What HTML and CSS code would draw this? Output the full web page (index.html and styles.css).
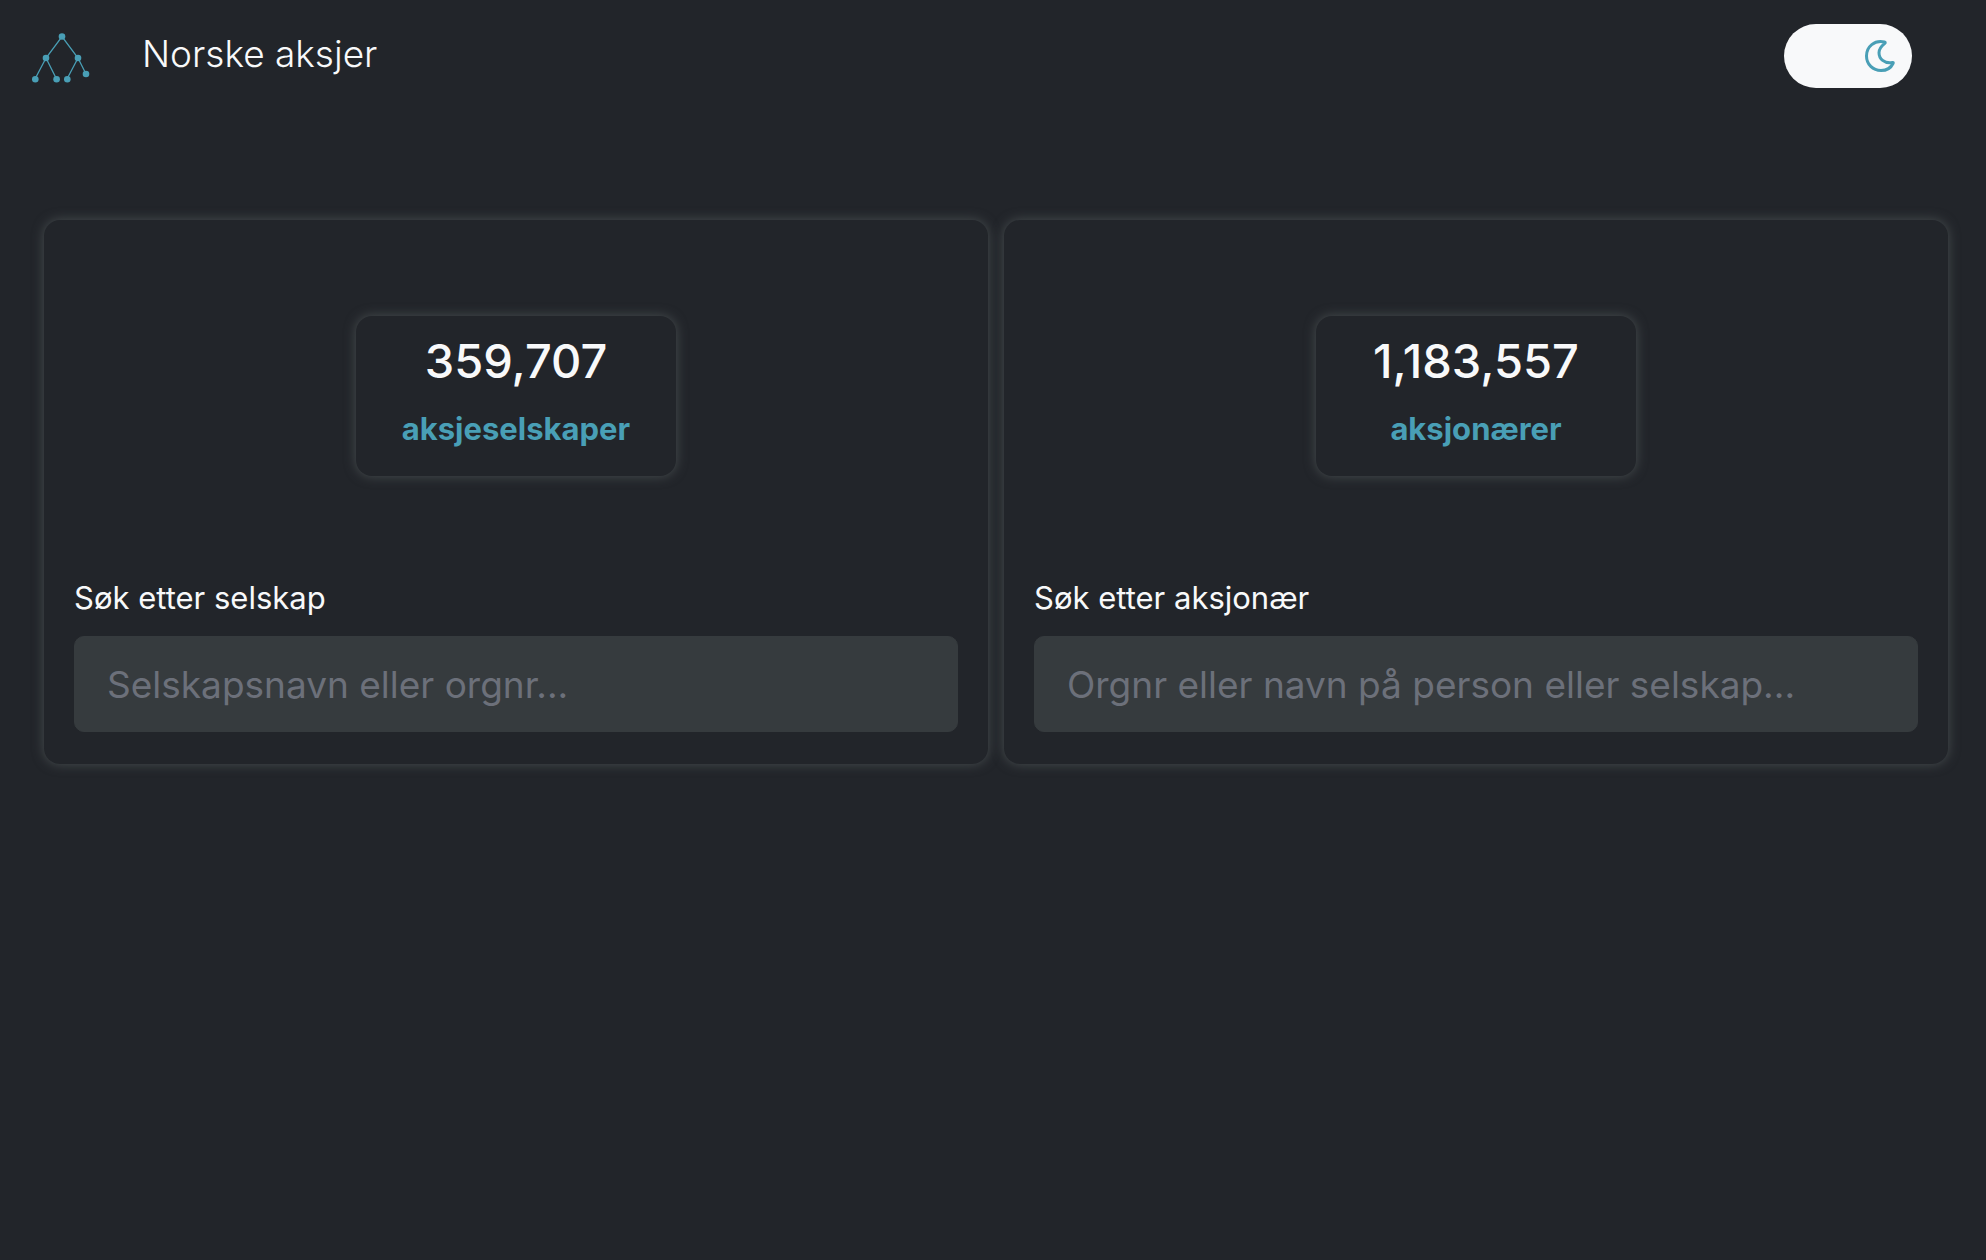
FILE: index.html
```html
<!DOCTYPE html>
<html lang="no">
<head>
  <meta charset="utf-8">
  <meta name="viewport" content="width=device-width, initial-scale=1">
  <title>Norske aksjer</title>
  <link rel="stylesheet" href="styles.css">
</head>
<body>
  <header class="navbar">
    <a class="brand" href="#" aria-label="Norske aksjer">
      <svg class="logo" viewBox="0 -2 64 64" aria-hidden="true">
        <path class="logo-lines" d="M5 53 16 32 32 10.500 48 32 56 48M16 32 26.500 53M48 32 37 53"/>
        <circle cx="32" cy="10.500" r="3.300"/>
        <circle cx="16" cy="32" r="3.300"/>
        <circle cx="48" cy="32" r="3.300"/>
        <circle cx="5.300" cy="53.300" r="3.300"/>
        <circle cx="26.600" cy="53.300" r="3.300"/>
        <circle cx="37.300" cy="53.300" r="3.300"/>
        <circle cx="56" cy="48" r="3.300"/>
      </svg>
    </a>
    <h1 class="title">Norske aksjer</h1>
    <button class="theme-toggle" type="button" aria-label="Bytt tema">
      <svg class="moon" viewBox="0 0 32 32" aria-hidden="true">
        <path d="M20.500 2C10.500 -.300 2.500 6.500 2.500 16C2.500 24.500 9 30.500 17 30.500C22.500 30.500 27 27.800 29 23.500C29.700 22 28.700 22.500 27.500 22.700C20.500 23.500 15 19 15 12.700C15 9 17 6.500 20.500 3.700C21.500 2.800 21.500 2.300 20.500 2Z"/>
      </svg>
    </button>
  </header>

  <main class="cards">
    <section class="card">
      <div class="stat">
        <span class="stat-value">359,707</span>
        <span class="stat-label">aksjeselskaper</span>
      </div>
      <div class="field">
        <label for="company">Søk etter selskap</label>
        <input id="company" type="text" placeholder="Selskapsnavn eller orgnr...">
      </div>
    </section>
    <section class="card">
      <div class="stat">
        <span class="stat-value">1,183,557</span>
        <span class="stat-label">aksjonærer</span>
      </div>
      <div class="field">
        <label for="shareholder">Søk etter aksjonær</label>
        <input id="shareholder" type="text" placeholder="Orgnr eller navn på person eller selskap...">
      </div>
    </section>
  </main>
</body>
</html>
```

FILE: styles.css
```css
:root {
  --dark: #22252a;
  --light: #f8f9fa;
  --primary: #499fb6;
  --glow: 0 0 12px #484e50;
}

* {
  box-sizing: border-box;
}

body {
  margin: 0;
  min-height: 100vh;
  background: var(--dark);
  color: var(--light);
  font-family: Inter, "Liberation Sans", sans-serif;
  font-size: 31px;
  line-height: 48px;
}

.navbar {
  display: flex;
  align-items: center;
  padding: 24px 74px 24px 30px;
}

.brand {
  display: flex;
}

.logo {
  width: 64px;
  height: 64px;
  fill: var(--primary);
}

.logo-lines {
  fill: none;
  stroke: var(--primary);
  stroke-width: 1.3;
}

.title {
  margin: 0 0 4px 48px;
  font-size: 37px;
  font-weight: 300;
}

.theme-toggle {
  display: flex;
  align-items: center;
  justify-content: flex-end;
  width: 128px;
  height: 64px;
  margin-left: auto;
  padding: 0 16px;
  border: 0;
  border-radius: 32px;
  background: var(--light);
  cursor: pointer;
}

.moon {
  width: 32px;
  height: 32px;
  fill: none;
  stroke: var(--primary);
  stroke-width: 3;
  stroke-linejoin: round;
}

.cards {
  display: grid;
  grid-template-columns: 1fr 1fr;
  gap: 16px;
  padding: 108px 38px 48px 44px;
}

.card {
  display: flex;
  flex-direction: column;
  gap: 98px;
  padding: 96px 30px 32px;
  border-radius: 16px;
  background: var(--dark);
  box-shadow: var(--glow);
}

.stat {
  display: flex;
  flex-direction: column;
  align-self: center;
  align-items: center;
  gap: 16px;
  width: 320px;
  padding: 15px 16px 25px;
  border-radius: 16px;
  box-shadow: var(--glow);
}

.stat-value {
  font-size: 47px;
  line-height: 60px;
  font-weight: 500;
}

.stat-label {
  color: var(--primary);
  font-size: 31px;
  line-height: 44px;
  font-weight: 700;
}

.field {
  display: flex;
  flex-direction: column;
  gap: 14px;
}

.field input {
  width: 100%;
  height: 96px;
  padding: 0 32px;
  border: 1px solid #363b3e;
  border-radius: 10px;
  background: #363b3e;
  color: var(--light);
  font: inherit;
  font-size: 37px;
}

.field input::placeholder {
  color: #6c707a;
  opacity: 1;
}

@media (max-width: 900px) {
  .cards {
    grid-template-columns: 1fr;
  }
}
```
